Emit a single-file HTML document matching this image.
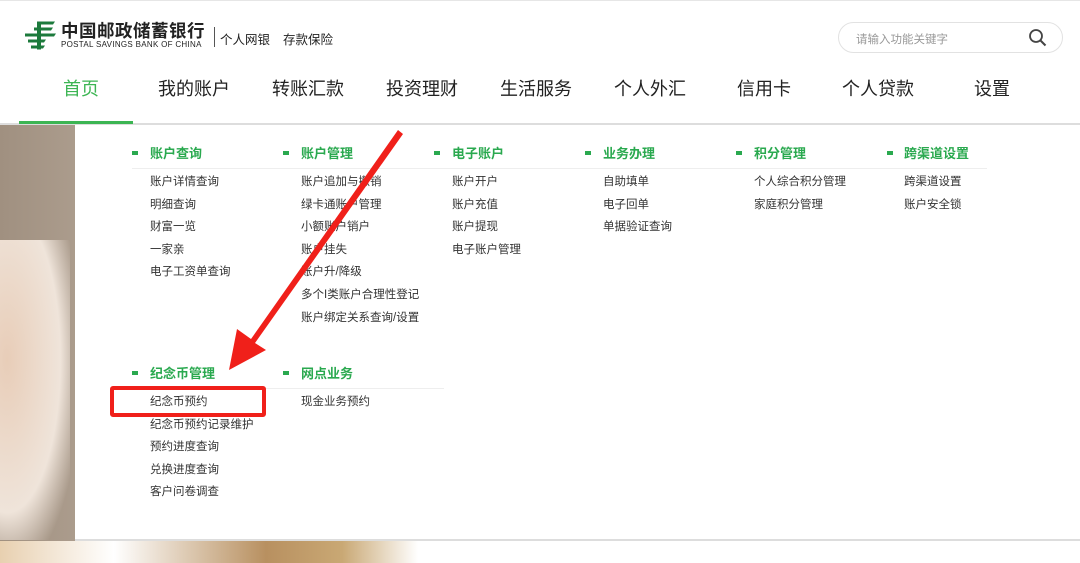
<!DOCTYPE html>
<html><head><meta charset="utf-8"><style>
*{margin:0;padding:0;box-sizing:border-box}
body{width:1080px;height:563px;overflow:hidden;background:#fff;position:relative;font-family:"Liberation Sans","Noto Sans CJK SC",sans-serif;color:#333}
.a{position:absolute;white-space:nowrap}
.nav{top:75px;font-size:18px;color:#222;transform:translateX(-50%)}
.t{font-size:13px;font-weight:bold;color:#2aa94f}
.b{width:6px;height:4px;background:#2aa94f}
.i{font-size:11.5px;color:#333}
</style></head><body>
<div class="a" style="left:0;top:0;width:1080px;height:1px;background:#e6e6e6"></div>
<svg class="a" style="left:25px;top:21px" width="32" height="29" viewBox="0 0 32 28"><g fill="#1c7a3c"><path d="M12 0h18l-2 3H12z"/><path d="M9 6h19l-2 3H9z"/><path d="M0 12h31l-2 3H0z"/><path d="M3 18h18l-2 3H3z"/><path d="M6 24h14l-2 3H6z"/><rect x="12" y="0" width="4" height="28"/></g></svg>
<div class="a" style="left:61px;top:18px;font-size:17.5px;font-weight:bold;color:#222;letter-spacing:0.5px">中国邮政储蓄银行</div>
<div class="a" style="left:61px;top:40px;font-size:8px;color:#222;letter-spacing:0.3px">POSTAL SAVINGS BANK OF CHINA</div>
<div class="a" style="left:214px;top:27px;width:1px;height:20px;background:#555"></div>
<div class="a" style="left:220px;top:29px;font-size:12.5px;color:#222">个人网银</div>
<div class="a" style="left:283px;top:29px;font-size:12.5px;color:#222">存款保险</div>
<div class="a" style="left:838px;top:22px;width:225px;height:31px;border:1px solid #e2e2e2;border-radius:16px"></div>
<div class="a" style="left:856px;top:31px;font-size:11.5px;color:#999">请输入功能关键字</div>
<svg class="a" style="left:1028px;top:28px" width="20" height="20" viewBox="0 0 20 20"><circle cx="8" cy="8" r="6" fill="none" stroke="#444" stroke-width="1.8"/><path d="M12.5 12.5l5 5" stroke="#444" stroke-width="2"/></svg>
<div class="a nav" style="left:81px;color:#3cb553">首页</div>
<div class="a nav" style="left:194px">我的账户</div>
<div class="a nav" style="left:308px">转账汇款</div>
<div class="a nav" style="left:422px">投资理财</div>
<div class="a nav" style="left:536px">生活服务</div>
<div class="a nav" style="left:650px">个人外汇</div>
<div class="a nav" style="left:764px">信用卡</div>
<div class="a nav" style="left:878px">个人贷款</div>
<div class="a nav" style="left:992px">设置</div>
<div class="a" style="left:0;top:123px;width:1080px;height:440px;background:linear-gradient(90deg,#a09080,#e0d4c8 40%,#f0e8e0 70%,#d9c2a0)"></div>
<div class="a" style="left:0;top:240px;width:70px;height:300px;background:radial-gradient(ellipse at 10% 40%,#e8cdb8,#efe4da 60%,transparent 85%)"></div>
<div class="a" style="left:0;top:541px;width:760px;height:22px;background:linear-gradient(90deg,#e8d0b0,#fff 15%,#b89060 35%,#c9a874 45%,#fff 55%,#fff 100%)"></div>
<div class="a" style="left:520px;top:541px;width:560px;height:22px;background:#fff"></div>
<div class="a" style="left:0;top:123px;width:1080px;height:2px;background:#ddd"></div>
<div class="a" style="left:19px;top:121px;width:114px;height:3px;background:#3cb553"></div>
<div class="a" style="left:75px;top:125px;width:1005px;height:416px;background:#fff;border-bottom:2px solid #ddd"></div>
<div class="a" style="left:132px;top:168px;width:855px;height:1px;background:#eee"></div>
<div class="a" style="left:132px;top:388px;width:312px;height:1px;background:#eee"></div>

<div class="a b" style="left:132px;top:151px"></div><div class="a t" style="left:150px;top:143px">账户查询</div>
<div class="a b" style="left:283px;top:151px"></div><div class="a t" style="left:301px;top:143px">账户管理</div>
<div class="a b" style="left:434px;top:151px"></div><div class="a t" style="left:452px;top:143px">电子账户</div>
<div class="a b" style="left:585px;top:151px"></div><div class="a t" style="left:603px;top:143px">业务办理</div>
<div class="a b" style="left:736px;top:151px"></div><div class="a t" style="left:754px;top:143px">积分管理</div>
<div class="a b" style="left:887px;top:151px"></div><div class="a t" style="left:904px;top:143px">跨渠道设置</div>
<div class="a b" style="left:132px;top:371px"></div><div class="a t" style="left:150px;top:363px">纪念币管理</div>
<div class="a b" style="left:283px;top:371px"></div><div class="a t" style="left:301px;top:363px">网点业务</div>

<div class="a i" style="left:150px;top:171px;line-height:22.6px">账户详情查询<br>明细查询<br>财富一览<br>一家亲<br>电子工资单查询</div>
<div class="a i" style="left:301px;top:171px;line-height:22.6px">账户追加与撤销<br>绿卡通账户管理<br>小额账户销户<br>账户挂失<br>账户升/降级<br>多个I类账户合理性登记<br>账户绑定关系查询/设置</div>
<div class="a i" style="left:452px;top:171px;line-height:22.6px">账户开户<br>账户充值<br>账户提现<br>电子账户管理</div>
<div class="a i" style="left:603px;top:171px;line-height:22.6px">自助填单<br>电子回单<br>单据验证查询</div>
<div class="a i" style="left:754px;top:171px;line-height:22.6px">个人综合积分管理<br>家庭积分管理</div>
<div class="a i" style="left:904px;top:171px;line-height:22.6px">跨渠道设置<br>账户安全锁</div>
<div class="a i" style="left:150px;top:391px;line-height:22.6px">纪念币预约<br>纪念币预约记录维护<br>预约进度查询<br>兑换进度查询<br>客户问卷调查</div>
<div class="a i" style="left:301px;top:391px;line-height:22.6px">现金业务预约</div>

<div class="a" style="left:110px;top:386px;width:156px;height:31px;border:4px solid #f0201a;border-radius:3px"></div>
<svg class="a" style="left:0;top:0" width="1080" height="563"><path d="M403 134L398 130L251 339L237 329L229 370L266 350L255 343Z" fill="#f0201a"/></svg>
</body></html>
